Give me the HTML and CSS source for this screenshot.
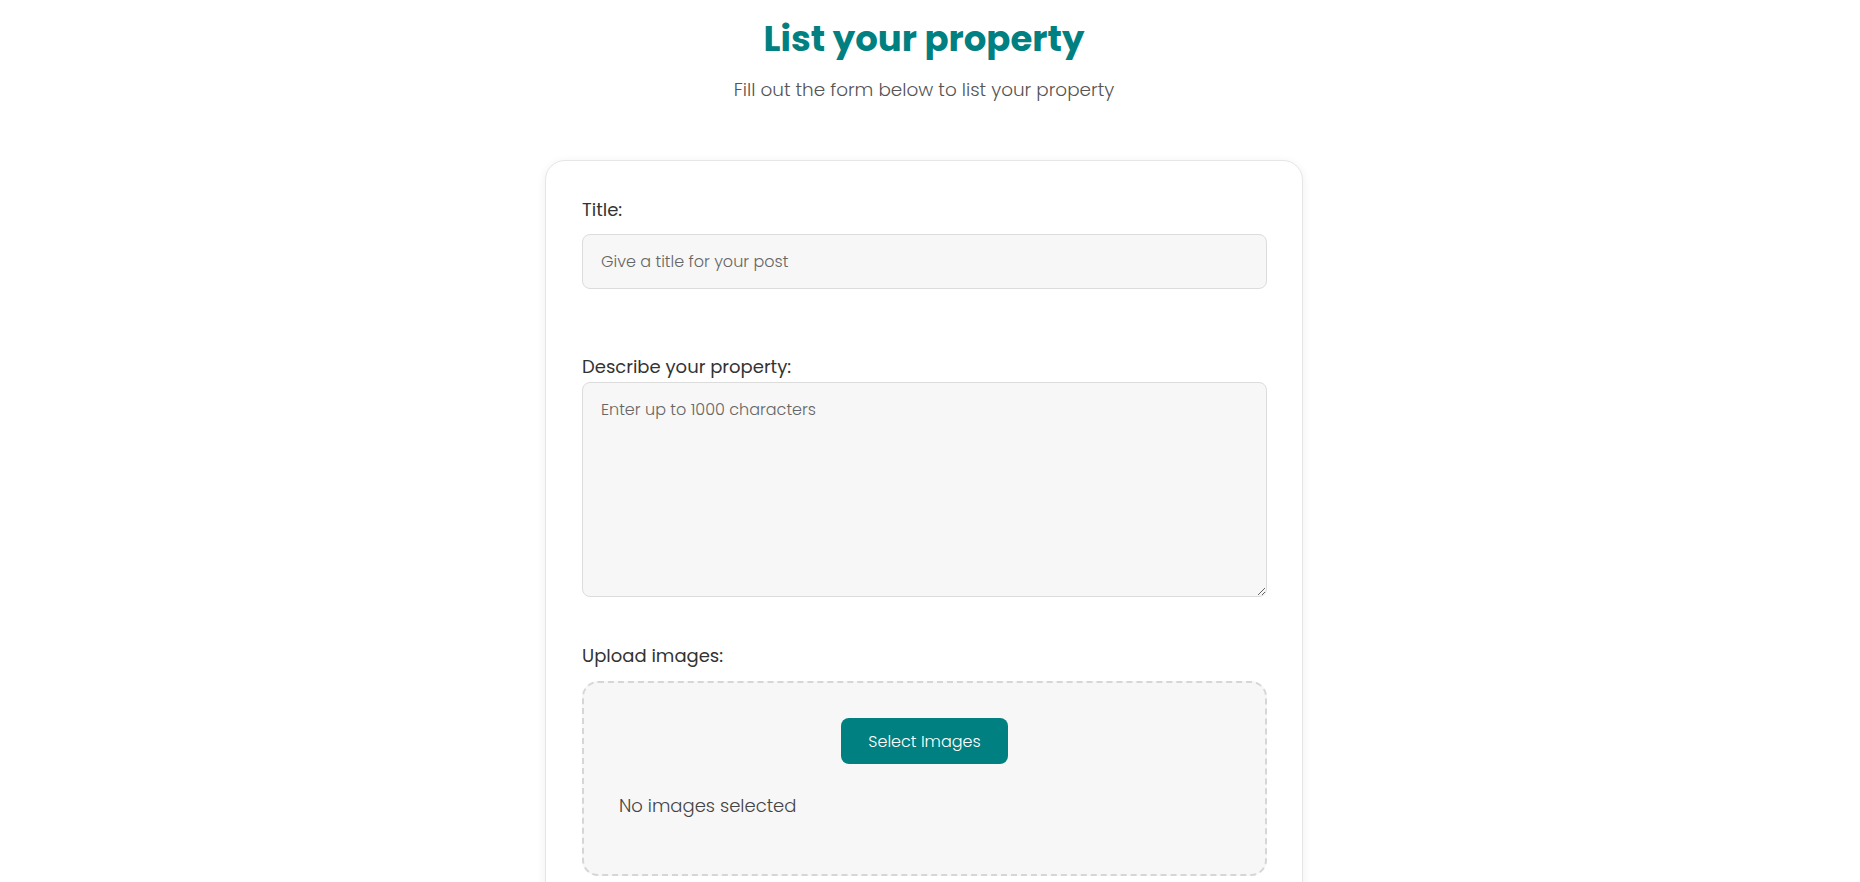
FILE: index.html
```html
<!DOCTYPE html>
<html lang="en">
<head>
<meta charset="utf-8">
<title>List your property</title>
<link rel="stylesheet" href="styles.css">
</head>
<body>
<main class="page">
  <header class="intro">
    <h1 class="intro-title">List your property</h1>
    <p class="intro-sub">Fill out the form below to list your property</p>
  </header>
  <form class="card">
    <div class="field field-title">
      <label class="label" for="title">Title:</label>
      <input class="input" id="title" type="text" placeholder="Give a title for your post">
    </div>
    <div class="field field-desc">
      <label class="label" for="desc">Describe your property:</label>
      <textarea class="textarea" id="desc" placeholder="Enter up to 1000 characters"></textarea>
    </div>
    <div class="field field-upload">
      <label class="label">Upload images:</label>
      <div class="dropzone">
        <button type="button" class="btn">Select Images</button>
        <p class="empty">No images selected</p>
      </div>
    </div>
  </form>
</main>
</body>
</html>
```
FILE: styles.css
```css
* { box-sizing: border-box; }
html, body { margin: 0; padding: 0; background: #fff; }
body {
  font-family: "Poppins", "Open Sans", "Liberation Sans", sans-serif;
  color: #333;
}
.page {
  display: flex;
  flex-direction: column;
  align-items: center;
  padding: 16px 12px 60px 0;
}
.intro { text-align: center; }
.intro-title {
  margin: 0;
  font-size: 35.5px;
  line-height: 46px;
  font-weight: 700;
  color: #008080;
}
.intro-sub {
  margin: 16px 0 0;
  font-size: 18.4px;
  line-height: 24px;
  font-weight: 300;
  color: #555;
}
.card {
  margin-top: 58px;
  width: 758px;
  background: #fff;
  border: 1px solid #e6e6e6;
  border-radius: 20px;
  box-shadow: 0 2px 10px rgba(0, 0, 0, 0.07);
  padding: 37px 35px 40px 36px;
  display: flex;
  flex-direction: column;
}
.field { display: flex; flex-direction: column; }
.label {
  font-size: 18px;
  line-height: 24px;
  font-weight: 400;
  color: #333;
}
.field-title .label { margin-bottom: 12px; }
.field-desc { margin-top: 66px; }
.field-desc .label { margin-bottom: 3px; }
.field-upload { margin-top: 47px; }
.field-upload .label { margin-bottom: 13px; }
.input, .textarea {
  font-family: inherit;
  font-size: 16px;
  font-weight: 300;
  color: #333;
  background: #f7f7f7;
  border: 1px solid #dcdcdc;
  border-radius: 8px;
  width: 100%;
  outline: none;
}
.input {
  height: 55px;
  padding: 0 18px;
}
.textarea {
  height: 215px;
  padding: 16px 18px;
  line-height: 22px;
  resize: vertical;
}
.input::placeholder, .textarea::placeholder { color: #666; }
.dropzone {
  background: #f7f7f7;
  border: 2px dashed #d6d6d6;
  border-radius: 16px;
  padding: 35px 35px 56px;
  display: flex;
  flex-direction: column;
}
.btn {
  align-self: center;
  font-family: inherit;
  font-size: 16px;
  font-weight: 300;
  color: #fff;
  background: #008080;
  border: none;
  border-radius: 8px;
  width: 167px;
  height: 46px;
  cursor: pointer;
}
.empty {
  margin: 30px 0 0;
  font-size: 18px;
  line-height: 24px;
  font-weight: 300;
  color: #444;
}
```
